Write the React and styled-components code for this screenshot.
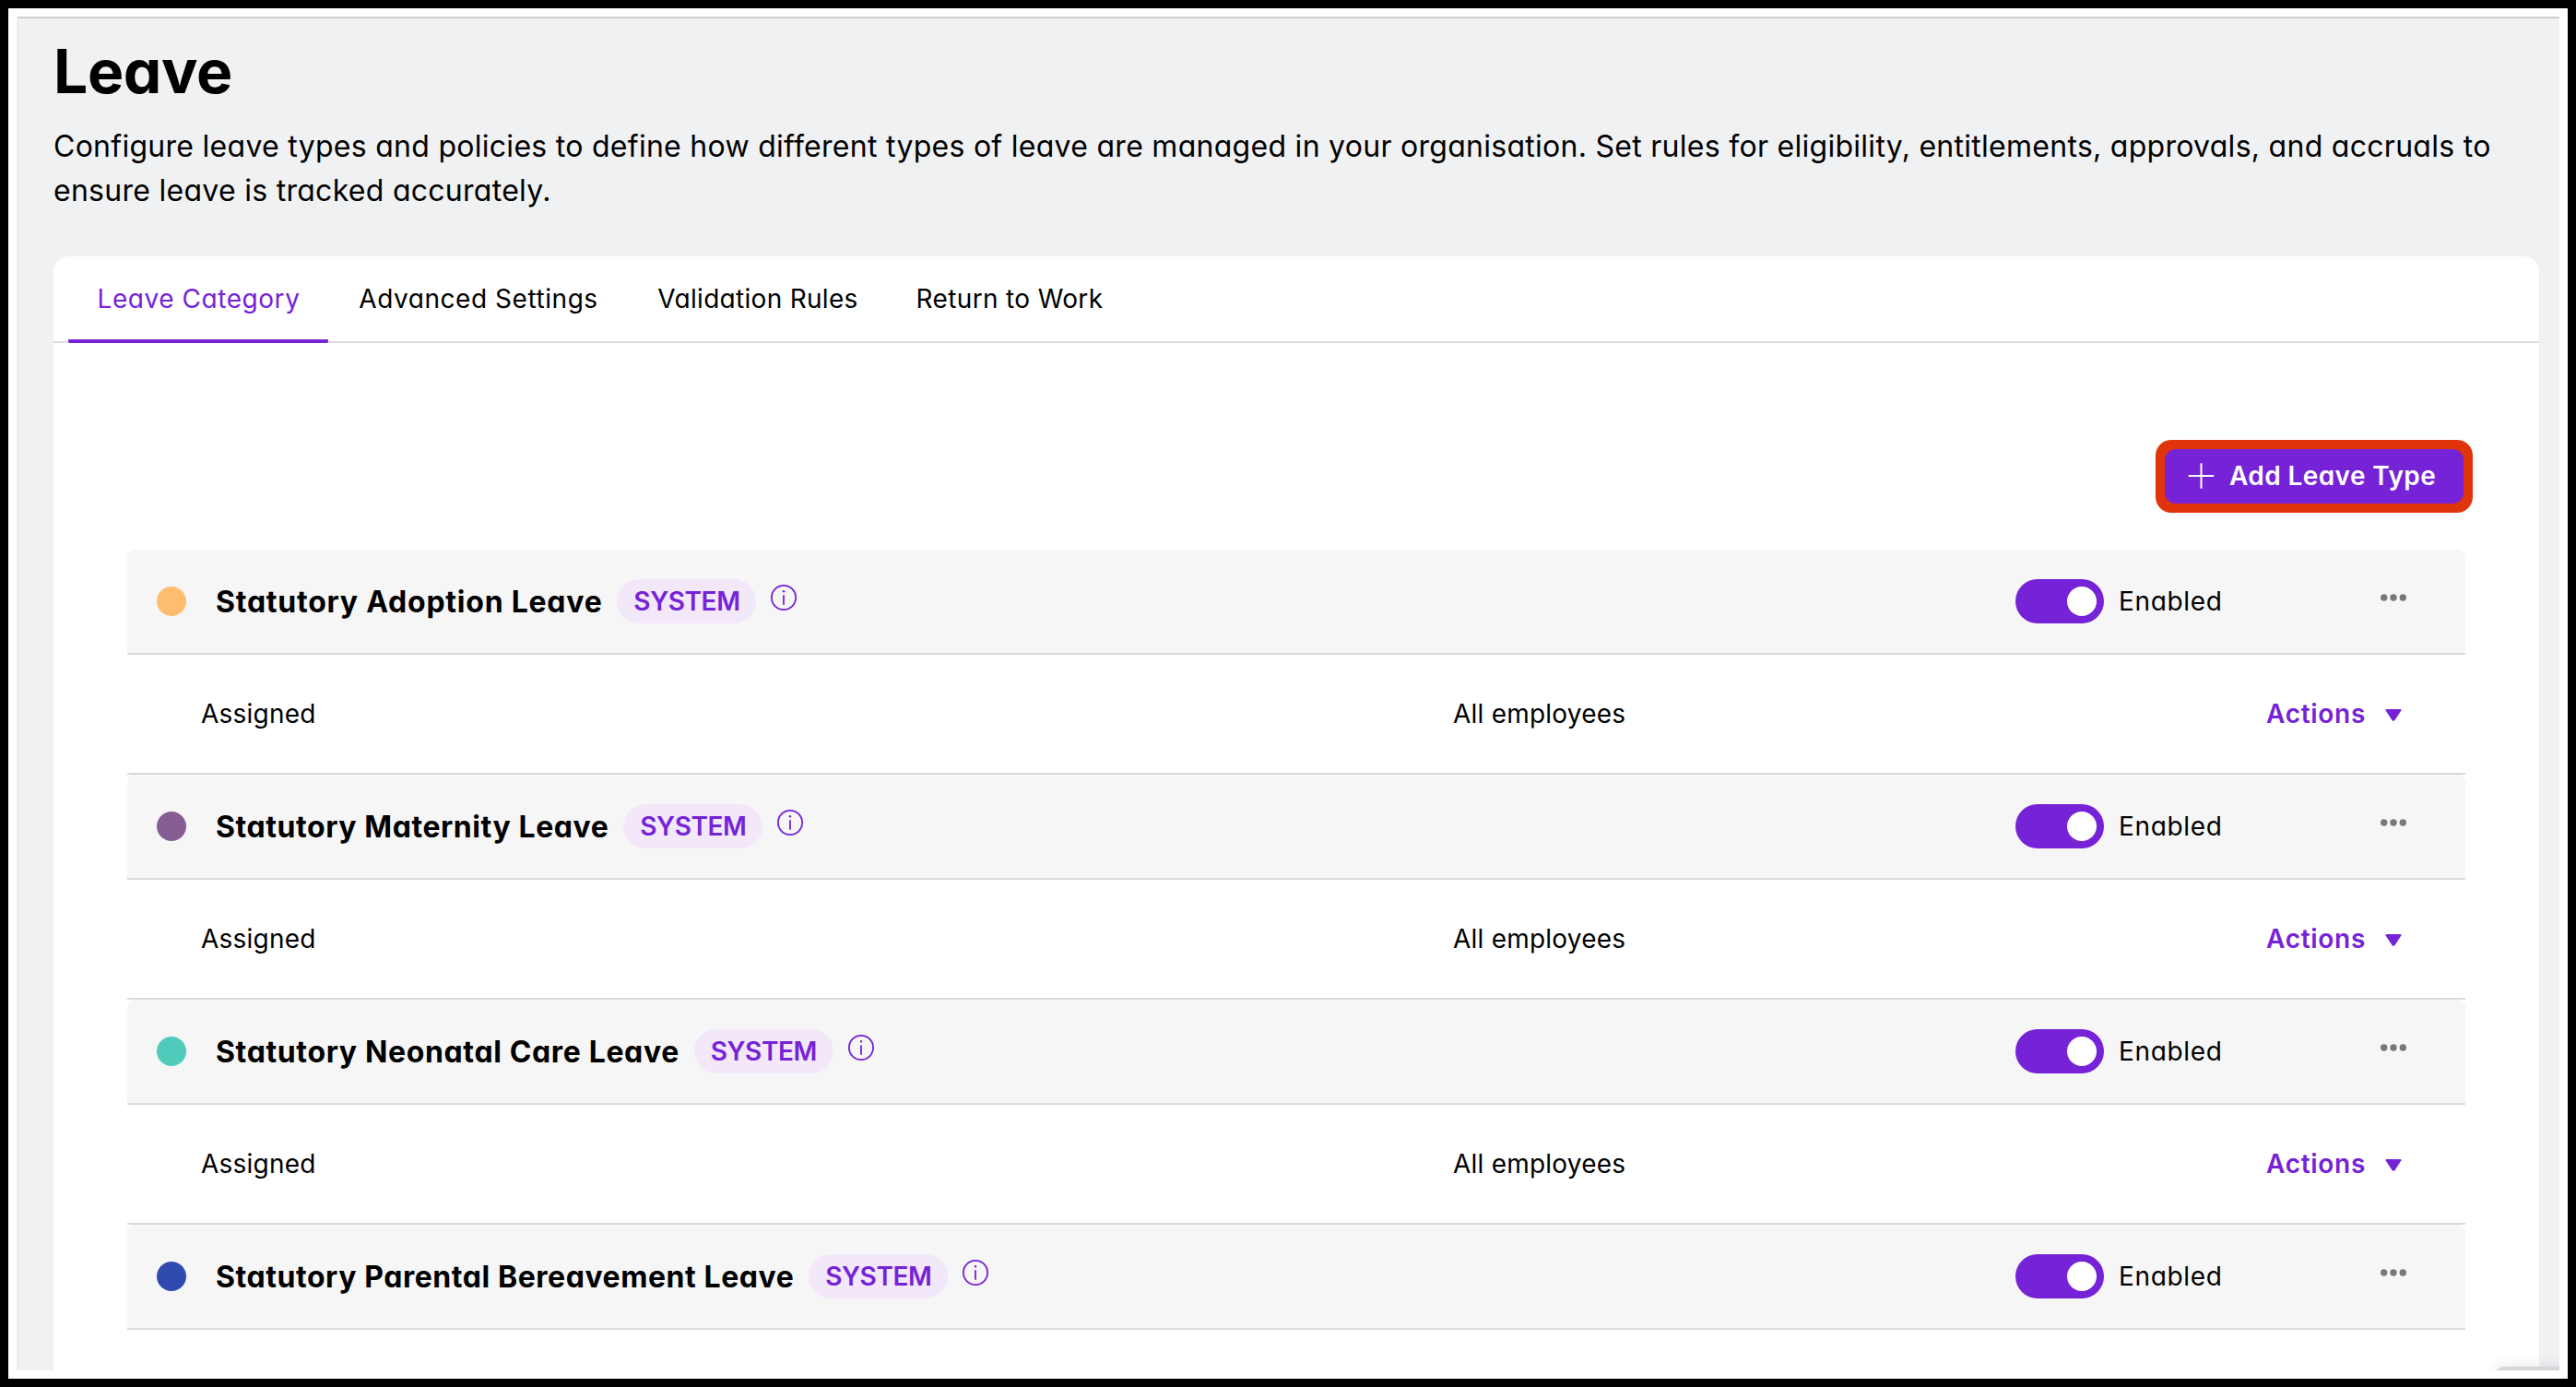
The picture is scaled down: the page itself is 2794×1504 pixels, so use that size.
import React from 'react'
import styled, { createGlobalStyle } from 'styled-components'

const GlobalStyle = createGlobalStyle`
    :root {
        --purple: #7622d7;
        --line: #d9d9e0;
    }

    * {
        box-sizing: border-box;
    }

    body {
        margin: 0;
        background: #000;
        color: #000;
        font-family: Inter, sans-serif;
        font-size: 28px;
        font-feature-settings: "cv11";
    }
`

const Frame = styled.div`
    width: 2794px;
    height: 1504px;
    border: 9px solid #000;
    padding: 9px;
    background: #fff;
`

const Page = styled.main`
    position: relative;
    display: flex;
    flex-direction: column;
    height: 1468px;
    padding: 17px 22px 0 38px;
    border-top: 2px solid #cccdce;
    border-left: 2px solid #ebecee;
    background: #f0f1f3;
    overflow: hidden;
`

const Title = styled.h1`
    margin: 0 0 18px;
    font-size: 66px;
    font-weight: 700;
    line-height: 80px;
    letter-spacing: -0.4px;
`

const Intro = styled.p`
    margin: 0 0 47px;
    font-size: 32px;
    line-height: 48px;
    letter-spacing: 0.28px;
`

const Card = styled.section`
    flex: 1;
    border-radius: 16px 16px 0 0;
    background: #fff;
`

const Tabs = styled.nav`
    display: flex;
    height: 94px;
    padding-left: 16px;
    border-bottom: 2px solid var(--line);
`

const Tab = styled.a`
    display: flex;
    justify-content: center;
    width: ${(p) => p.$width}px;
    height: 94px;
    padding-left: 1px;
    border-bottom: 4px solid ${(p) => (p.$active ? 'var(--purple)' : 'transparent')};
    border-radius: 2px;
    color: ${(p) => (p.$active ? 'var(--purple)' : '#000')};
    line-height: 93px;
    letter-spacing: ${(p) => p.$tracking}px;
    white-space: nowrap;
`

const Toolbar = styled.div`
    display: flex;
    justify-content: flex-end;
    padding: 105px 72px 40px 0;
`

const AddButton = styled.button`
    display: flex;
    align-items: center;
    gap: 16px;
    width: 344px;
    height: 79px;
    padding: 0 0 1px 25px;
    border: 0;
    border-radius: 17px;
    background: var(--purple);
    color: #fff;
    font: inherit;
    font-feature-settings: inherit;
    font-weight: 600;
    letter-spacing: 0.4px;
    white-space: nowrap;
`

/* red highlight ring, rounded on the inside as well */
const Highlight = styled.div`
    padding: 10px;
    border-radius: 17px;
    background: #e0350b;

    ${AddButton} {
        width: 324px;
        height: 59px;
        border-radius: 12px;
    }
`

const List = styled.div`
    padding: 0 80px;
`

const TypeHeader = styled.header`
    display: flex;
    align-items: center;
    height: 112px;
    padding: 0 64px 0 32px;
    border-radius: 8px 8px 0 0;
    background: #f6f6f6;
`

const LeaveSection = styled.section`
    > * + * {
        border-top: 2px solid var(--line);
    }

    border-bottom: 2px solid var(--line);
`

const Dot = styled.span`
    width: 32px;
    height: 32px;
    border-radius: 50%;
    background: ${(p) => p.$color};
`

const Name = styled.h2`
    margin: 0 16px 0 32px;
    font-size: 32px;
    font-weight: 700;
    letter-spacing: ${(p) => p.$tracking}px;
    white-space: nowrap;
`

const Tag = styled.span`
    width: 151px;
    height: 48px;
    border-radius: 24px;
    background: #f2e8fa;
    color: var(--purple);
    font-weight: 600;
    line-height: 48px;
    letter-spacing: -0.4px;
    text-align: center;
`

const InfoIcon = styled.svg`
    width: 28px;
    height: 28px;
    margin: 0 0 8px 16px;
    color: var(--purple);
`

const Controls = styled.div`
    display: flex;
    align-items: center;
    width: 424px;
    margin-left: auto;
`

const Switch = styled.span`
    display: flex;
    justify-content: flex-end;
    width: 96px;
    height: 48px;
    margin-right: 16px;
    padding: 8px;
    border-radius: 24px;
    background: var(--purple);

    i {
        width: 32px;
        height: 32px;
        border-radius: 50%;
        background: #fff;
    }
`

const SwitchLabel = styled.span`
    letter-spacing: 0.65px;
`

const MoreIcon = styled.svg`
    width: 28px;
    height: 8px;
    margin: 0 0 8px auto;
    fill: #77787b;
`

const TypeRow = styled.div`
    display: grid;
    grid-template-columns: 1358px 1fr auto;
    align-items: center;
    height: 130px;
    padding: 0 69px 0 80px;
    letter-spacing: 0.22px;
`

const Actions = styled.span`
    display: flex;
    align-items: center;
    gap: 21px;
    color: var(--purple);
    font-weight: 600;
    letter-spacing: 0.7px;

    svg {
        width: 18px;
        height: 13px;
        margin-top: 2px;
    }
`

/* top edge of the chat widget peeking in at the bottom right */
const Widget = styled.div`
    position: absolute;
    right: -20px;
    bottom: -36px;
    width: 90px;
    height: 40px;
    border-radius: 10px;
    background: #d5d6dc;
    box-shadow: 0 0 16px rgba(0, 0, 0, 0.1);
`

const tabs = [
    { label: 'Leave Category', width: 282, tracking: 0.55, active: true },
    { label: 'Advanced Settings', width: 325, tracking: 0.55 },
    { label: 'Validation Rules', width: 281, tracking: 0.3 },
    { label: 'Return to Work', width: 265, tracking: 0.35 },
]

const leaveTypes = [
    { name: 'Statutory Adoption Leave', color: '#ffbd70', tracking: 0.76, assigned: true },
    { name: 'Statutory Maternity Leave', color: '#865e93', tracking: 0.57, assigned: true },
    { name: 'Statutory Neonatal Care Leave', color: '#50cbbb', tracking: 0.64, assigned: true },
    { name: 'Statutory Parental Bereavement Leave', color: '#304baf', tracking: 0.56 },
]

const Plus = () => (
    <svg width='29' height='28' viewBox='0 0 29 28' stroke='currentColor' strokeWidth='2' strokeLinecap='round'>
        <path d='M1.5 14h26M14.5 1v26' />
    </svg>
)

const Info = () => (
    <InfoIcon viewBox='0 0 28 28' fill='none' stroke='currentColor' strokeWidth='1.8' strokeLinecap='round'>
        <circle cx='14' cy='14' r='13.1' />
        <path d='M14 12v9' />
        <circle cx='14' cy='7.2' r='1.2' fill='currentColor' stroke='none' />
    </InfoIcon>
)

const More = () => (
    <MoreIcon viewBox='0 0 28 8'>
        <circle cx='3.7' cy='4' r='3.7' />
        <circle cx='14' cy='4' r='3.7' />
        <circle cx='24.3' cy='4' r='3.7' />
    </MoreIcon>
)

const LeaveType = ({ type }) => (
    <LeaveSection>
        <TypeHeader>
            <Dot $color={type.color} />
            <Name $tracking={type.tracking}>{type.name}</Name>
            <Tag>SYSTEM</Tag>
            <Info />
            <Controls>
                <Switch><i /></Switch>
                <SwitchLabel>Enabled</SwitchLabel>
                <More />
            </Controls>
        </TypeHeader>
        {type.assigned && (
            <TypeRow>
                <span>Assigned</span>
                <span>All employees</span>
                <Actions>
                    Actions
                    <svg viewBox='0 0 18 13' fill='currentColor'>
                        <path d='M1.5 0h15a1 1 0 0 1 .85 1.6l-6.7 10.2a2 2 0 0 1-3.3 0L.65 1.6A1 1 0 0 1 1.5 0z' />
                    </svg>
                </Actions>
            </TypeRow>
        )}
    </LeaveSection>
)

export default function App() {
    return (
        <Frame>
            <GlobalStyle />
            <Page>
                <Title>Leave</Title>
                <Intro>
                    Configure leave types and policies to define how different types of leave are managed in your
                    organisation. Set rules for eligibility, entitlements, approvals, and accruals to ensure leave is
                    tracked accurately.
                </Intro>
                <Card>
                    <Tabs>
                        {tabs.map((tab) => (
                            <Tab key={tab.label} $width={tab.width} $tracking={tab.tracking} $active={tab.active}>
                                {tab.label}
                            </Tab>
                        ))}
                    </Tabs>
                    <Toolbar>
                        <Highlight>
                            <AddButton>
                                <Plus />
                                Add Leave Type
                            </AddButton>
                        </Highlight>
                    </Toolbar>
                    <List>
                        {leaveTypes.map((type) => <LeaveType key={type.name} type={type} />)}
                    </List>
                </Card>
                <Widget />
            </Page>
        </Frame>
    )
}
